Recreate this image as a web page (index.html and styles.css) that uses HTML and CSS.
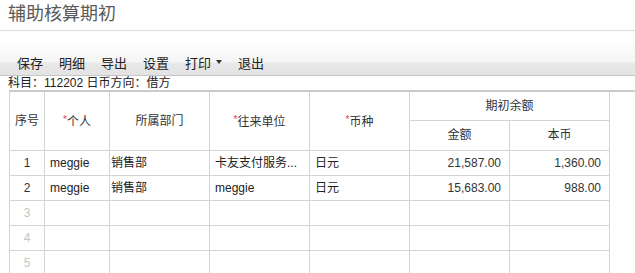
FILE: index.html
```html
<!DOCTYPE html>
<html lang="zh">
<head>
<meta charset="utf-8">
<title>辅助核算期初</title>
<link rel="stylesheet" href="styles.css">
</head>
<body>
<div class="title">辅助核算期初</div>
<div class="toolbar">
  <span class="tb-item">保存</span>
  <span class="tb-item">明细</span>
  <span class="tb-item">导出</span>
  <span class="tb-item">设置</span>
  <span class="tb-item">打印<i class="caret"></i></span>
  <span class="tb-item">退出</span>
</div>
<div class="info">科目：112202 日币方向：借方</div>
<div class="grid-wrap">
  <table class="grid">
    <colgroup>
      <col class="c-seq"><col class="c-person"><col class="c-w"><col class="c-w"><col class="c-w"><col class="c-w"><col class="c-w">
    </colgroup>
    <thead>
      <tr>
        <th rowspan="2" class="first">序号</th>
        <th rowspan="2"><span class="req">*</span>个人</th>
        <th rowspan="2">所属部门</th>
        <th rowspan="2"><span class="req">*</span>往来单位</th>
        <th rowspan="2"><span class="req">*</span>币种</th>
        <th colspan="2" class="h1">期初余额</th>
      </tr>
      <tr>
        <th class="h2">金额</th>
        <th class="h2">本币</th>
      </tr>
    </thead>
    <tbody>
      <tr>
        <td class="first seq">1</td><td class="txt">meggie</td><td class="dept">销售部</td><td class="txt">卡友支付服务...</td><td class="txt">日元</td><td class="num">21,587.00</td><td class="num">1,360.00</td>
      </tr>
      <tr>
        <td class="first seq">2</td><td class="txt">meggie</td><td class="dept">销售部</td><td class="txt">meggie</td><td class="txt">日元</td><td class="num">15,683.00</td><td class="num">988.00</td>
      </tr>
      <tr class="empty">
        <td class="first seq">3</td><td></td><td></td><td></td><td></td><td></td><td></td>
      </tr>
      <tr class="empty">
        <td class="first seq">4</td><td></td><td></td><td></td><td></td><td></td><td></td>
      </tr>
      <tr class="empty">
        <td class="first seq">5</td><td></td><td></td><td></td><td></td><td></td><td></td>
      </tr>
    </tbody>
  </table>
</div>
</body>
</html>
```

FILE: styles.css
```css
html, body {
  margin: 0;
  padding: 0;
  background: #fff;
}
body {
  font-family: "Liberation Sans", "Noto Sans CJK SC", sans-serif;
  font-size: 12px;
  color: #333;
}
.title {
  height: 30px;
  line-height: 28px;
  padding-left: 8px;
  font-size: 18px;
  color: #5a5a5a;
  border-bottom: 1px solid #dcdcdc;
}
.toolbar {
  margin-top: 12px;
  height: 26px;
  padding: 6px 0 0 9px;
  border-bottom: 1px solid #c6c6c6;
  background: linear-gradient(#fdfdfd 0, #f5f5f5 19px, #e8e8e8 20px, #e3e3e3 32px);
  display: flex;
  align-items: center;
}
.tb-item {
  font-size: 13px;
  color: #222;
  padding: 0 8px;
  display: flex;
  align-items: center;
}
.caret {
  display: inline-block;
  width: 0;
  height: 0;
  margin-left: 5px;
  border-left: 3.5px solid transparent;
  border-right: 3.5px solid transparent;
  border-top: 4px solid #333;
}
.info {
  height: 14px;
  line-height: 14px;
  padding-left: 8px;
  font-size: 12px;
  color: #222;
}
.grid-wrap {
  margin-left: 9px;
  border-top: 2px solid #cbcbcb;
}
.grid {
  border-collapse: separate;
  border-spacing: 0;
  table-layout: fixed;
  width: 601px;
}
.c-seq { width: 36px; }
.c-person { width: 65px; }
.c-w { width: 100px; }
.grid th, .grid td {
  border-right: 1px solid #d4d4d4;
  border-bottom: 1px solid #d4d4d4;
  padding: 0;
  overflow: hidden;
  white-space: nowrap;
  line-height: 24px;
}
.grid .first {
  border-left: 1px solid #d4d4d4;
}
.grid th {
  font-weight: normal;
  color: #333;
  text-align: center;
  font-size: 12px;
}
.grid th.h1 { line-height: 28px; }
.grid th.h2 { line-height: 29px; }
.req {
  color: #e0405a;
  font-size: 10px;
  vertical-align: 3px;
}
.seq {
  text-align: center;
  color: #333;
}
.empty .seq {
  color: #c4c4c4;
}
.txt {
  padding-left: 5px !important;
  color: #222;
}
.dept {
  padding-left: 1px !important;
  color: #222;
}
.num {
  text-align: right;
  padding-right: 8px !important;
  color: #333;
}
```
